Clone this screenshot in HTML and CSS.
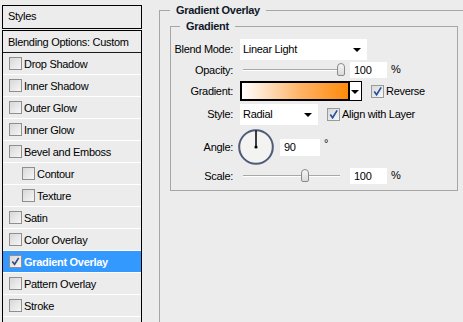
FILE: index.html
```html
<!DOCTYPE html>
<html lang="en">
<head>
  <meta charset="UTF-8" />
  <title>Layer Style</title>
  <link rel="stylesheet" href="styles.css">
</head>
<body>
  <div class="dialog">
    <!-- liste des styles -->
    <aside class="styles-panel">
      <div class="panel-head">Styles</div>
      <ul class="style-list">
        <li class="style-item blend">Blending Options: Custom</li>
        <li class="style-item"><span class="check"></span>Drop Shadow</li>
        <li class="style-item"><span class="check"></span>Inner Shadow</li>
        <li class="style-item"><span class="check"></span>Outer Glow</li>
        <li class="style-item"><span class="check"></span>Inner Glow</li>
        <li class="style-item"><span class="check"></span>Bevel and Emboss</li>
        <li class="style-item sub"><span class="check"></span>Contour</li>
        <li class="style-item sub"><span class="check"></span>Texture</li>
        <li class="style-item"><span class="check"></span>Satin</li>
        <li class="style-item"><span class="check"></span>Color Overlay</li>
        <li class="style-item active">
          <span class="check"><svg viewBox="0 0 12 12"><polyline points="2.5,6 5,9 9.5,2" /></svg></span>Gradient Overlay
        </li>
        <li class="style-item"><span class="check"></span>Pattern Overlay</li>
        <li class="style-item"><span class="check"></span>Stroke</li>
      </ul>
    </aside>

    <!-- réglages -->
    <main class="settings">
      <fieldset class="group outer">
        <legend>Gradient Overlay</legend>
        <fieldset class="group inner">
          <legend>Gradient</legend>
          <div class="form">
            <div class="row r-blend">
              <label>Blend Mode:</label>
              <div class="ctrl">
                <div class="select w-blend">Linear Light<span class="arrow"></span></div>
              </div>
            </div>
            <div class="row r-opacity">
              <label>Opacity:</label>
              <div class="ctrl">
                <div class="slider"><span class="thumb" style="left: 94px"></span></div>
                <div class="field w-num">100</div>
                <span class="unit">%</span>
              </div>
            </div>
            <div class="row r-gradient">
              <label>Gradient:</label>
              <div class="ctrl">
                <div class="gradient-box"></div>
                <div class="gradient-drop"><span class="arrow"></span></div>
                <span class="cb cb-reverse"><svg viewBox="0 0 12 12"><polyline points="2.5,6 5,9.5 10,1.5" /></svg></span>
                <span class="cb-label">Reverse</span>
              </div>
            </div>
            <div class="row r-style">
              <label>Style:</label>
              <div class="ctrl">
                <div class="select w-style">Radial<span class="arrow"></span></div>
                <span class="cb cb-align"><svg viewBox="0 0 12 12"><polyline points="2.5,6 5,9.5 10,1.5" /></svg></span>
                <span class="cb-label">Align with Layer</span>
              </div>
            </div>
            <div class="row r-angle">
              <label>Angle:</label>
              <div class="ctrl">
                <svg class="dial" viewBox="0 0 36 36">
                  <circle cx="18" cy="18" r="16.8" fill="#f3f3f1" stroke="#4f5b78" stroke-width="2" />
                  <line x1="18" y1="18" x2="18" y2="1.5" stroke="#000" stroke-width="1.5" />
                  <circle cx="18" cy="18" r="1.6" fill="#000" />
                </svg>
                <div class="field w-angle">90</div>
                <span class="deg">°</span>
              </div>
            </div>
            <div class="row r-scale">
              <label>Scale:</label>
              <div class="ctrl">
                <div class="slider"><span class="thumb" style="left: 58px"></span></div>
                <div class="field w-num">100</div>
                <span class="unit">%</span>
              </div>
            </div>
          </div>
        </fieldset>
      </fieldset>
    </main>
  </div>
</body>
</html>
```

FILE: styles.css
```css
body {
  margin: 0;
  padding: 0;
  background: #ececec;
  font-family: 'Liberation Sans', Arial, sans-serif;
  font-size: 11px;
  letter-spacing: -0.3px;
  color: #000;
  overflow: hidden;
}

.dialog {
  display: flex;
  align-items: flex-start;
  height: 322px;
}

/* PANNEAU STYLES */
.styles-panel {
  width: 140px;
  margin: 5px 0 0 2px;
  flex-shrink: 0;
}

.panel-head {
  height: 22px;
  line-height: 21px;
  border: 1px solid #000;
  padding-left: 5px;
}

.style-list {
  list-style: none;
  margin: 1px 0 0;
  padding: 0;
  border: 1px solid #000;
  border-bottom: none;
  height: 300px;
}

.style-item {
  display: flex;
  align-items: center;
  height: 21px;
  border-bottom: 1px solid #fff;
  padding-left: 6px;
}

.style-item.blend {
  height: 21px;
  padding-left: 5px;
  border-bottom-color: #1a1a1a;
}

.style-item.sub {
  padding-left: 19px;
}

.style-item.active {
  background: #3399ff;
  color: #fff;
  font-weight: bold;
}

.check {
  width: 11px;
  height: 11px;
  border: 1px solid #8f8f8f;
  background: linear-gradient(135deg, #d8d8d8, #f6f6f6);
  margin-right: 2px;
  flex-shrink: 0;
}

.check svg {
  display: block;
  width: 11px;
  height: 11px;
  fill: none;
  stroke: #3a4a7a;
  stroke-width: 1.8;
}

/* REGLAGES */
.settings {
  padding-left: 17px;
}

.group {
  border: 1px solid #a6a6a6;
  margin: 0;
  padding: 0;
}

.group legend {
  font-weight: bold;
  line-height: 13px;
  padding: 0 6px;
  color: #101828;
}

.outer {
  width: 320px;
  height: 330px;
  margin-top: 4px;
  border-right: none;
  border-bottom: none;
  padding-left: 10px;
  box-sizing: border-box;
}

.inner {
  width: 288px;
  box-sizing: border-box;
  margin-top: 3px;
  padding: 5px 0 6px;
}

.inner > legend {
  margin-left: 9px;
}

.row {
  display: flex;
  align-items: center;
}

.row label {
  width: 62px;
  text-align: right;
  flex-shrink: 0;
}

.ctrl {
  display: flex;
  align-items: center;
  margin-left: 7px;
}

.r-blend { height: 22px; }
.r-opacity { height: 20px; }
.r-gradient { height: 22px; }
.r-style { height: 24px; }
.r-angle { height: 42px; }
.r-scale { height: 16px; }

.select {
  position: relative;
  height: 21px;
  line-height: 21px;
  background: #fff;
  padding-left: 3px;
  box-sizing: border-box;
}

.w-blend { width: 127px; }
.w-style { width: 78px; }

.arrow {
  position: absolute;
  right: 6px;
  top: 9px;
  border-left: 4px solid transparent;
  border-right: 4px solid transparent;
  border-top: 4px solid #000;
}

.slider {
  position: relative;
  width: 97px;
  height: 1px;
  margin-left: 3px;
  background: #a8a8a8;
  border-bottom: 1px solid #fff;
}

.thumb {
  position: absolute;
  top: -6px;
  width: 6px;
  height: 11px;
  border: 1px solid #8a8a8a;
  border-radius: 4px 4px 2px 2px;
  background: linear-gradient(#f6f6f6, #dadada);
}

.field {
  height: 16px;
  line-height: 16px;
  background: #fff;
  padding-left: 4px;
  box-sizing: border-box;
}

.w-num {
  width: 37px;
  margin-left: 10px;
}

.w-angle {
  width: 40px;
  height: 17px;
  margin-left: 6px;
}

.unit {
  margin-left: 4px;
  margin-top: -3px;
}

.deg {
  margin-left: 4px;
  margin-top: -8px;
}

.gradient-box {
  width: 110px;
  height: 20px;
  box-sizing: border-box;
  border: 2px solid #000;
  background: linear-gradient(to right, #ffffff, #ffb366 55%, #ff8a0a);
}

.gradient-drop {
  position: relative;
  width: 12px;
  height: 20px;
  box-sizing: border-box;
  border: 1px solid #000;
  border-left: none;
  background: #fff;
}

.gradient-drop .arrow {
  right: 2px;
  top: 8px;
}

.cb {
  width: 11px;
  height: 11px;
  border: 1px solid #9a9a9a;
  background: linear-gradient(135deg, #d9d9d9, #f7f7f7);
}

.cb svg {
  display: block;
  width: 11px;
  height: 11px;
  fill: none;
  stroke: #24509e;
  stroke-width: 1.8;
}

.cb-reverse { margin-left: 9px; }
.cb-align { margin-left: 9px; }

.cb-label {
  margin-left: 2px;
}

.dial {
  width: 36px;
  height: 36px;
  margin-left: -2px;
}
```
